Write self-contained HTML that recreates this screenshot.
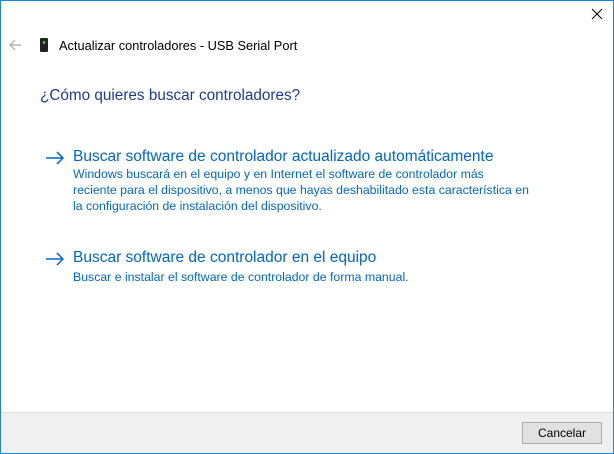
<!DOCTYPE html>
<html><head><meta charset="utf-8"><style>
*{margin:0;padding:0;box-sizing:border-box}
body{width:614px;height:454px;overflow:hidden;background:#fff;font-family:"Liberation Sans",sans-serif;position:relative}
.frame{position:absolute;left:0;top:0;width:614px;height:454px;border:1px solid #1883d7}
.t{position:absolute;white-space:nowrap}
.footer{position:absolute;left:1px;right:1px;top:412px;bottom:1px;background:#f0f0f0;border-top:1px solid #dfdfdf}
.btn{position:absolute;left:522px;top:422px;width:80px;height:22px;background:#e1e1e1;border:1px solid #adadad;font-size:12px;text-align:center;line-height:20px;color:#000}
.link{color:#0066cc;font-size:15.5px}
.desc{color:#0066cc;font-size:12.3px;line-height:16px}
</style></head><body>
<div class="footer"></div>
<div class="btn">Cancelar</div>
<svg class="t" style="left:591px;top:8px" width="12" height="12"><path d="M1 1L11 11M11 1L1 11" stroke="#000" stroke-width="1"/></svg>
<svg class="t" style="left:9px;top:39px" width="13" height="12"><path d="M1 6H12M6 1L1 6L6 11" stroke="#aaa" stroke-width="1.2" fill="none"/></svg>
<div class="t" style="left:40px;top:38px;width:8px;height:14px;background:#222;border-radius:1px"></div>
<div class="t" style="left:43px;top:41px;width:2px;height:3px;background:#3c3"></div>
<div class="t" style="left:59px;top:38px;font-size:12.8px;color:#000">Actualizar controladores - USB Serial Port</div>
<div class="t" style="left:40px;top:87px;font-size:15.3px;color:#1e3a9a">¿Cómo quieres buscar controladores?</div>
<svg class="t" style="left:45px;top:151px" width="20" height="14"><path d="M1 7H18M12 1L18 7L12 13" stroke="#0066cc" stroke-width="1.5" fill="none"/></svg>
<div class="t link" style="left:73px;top:148px">Buscar software de controlador actualizado automáticamente</div>
<div class="t desc" style="left:73px;top:166px">Windows buscará en el equipo y en Internet el software de controlador más<br>reciente para el dispositivo, a menos que hayas deshabilitado esta característica en<br>la configuración de instalación del dispositivo.</div>
<svg class="t" style="left:45px;top:252px" width="20" height="14"><path d="M1 7H18M12 1L18 7L12 13" stroke="#0066cc" stroke-width="1.5" fill="none"/></svg>
<div class="t link" style="left:73px;top:249px">Buscar software de controlador en el equipo</div>
<div class="t desc" style="left:73px;top:269px">Buscar e instalar el software de controlador de forma manual.</div>
<div class="frame"></div>
</body></html>
